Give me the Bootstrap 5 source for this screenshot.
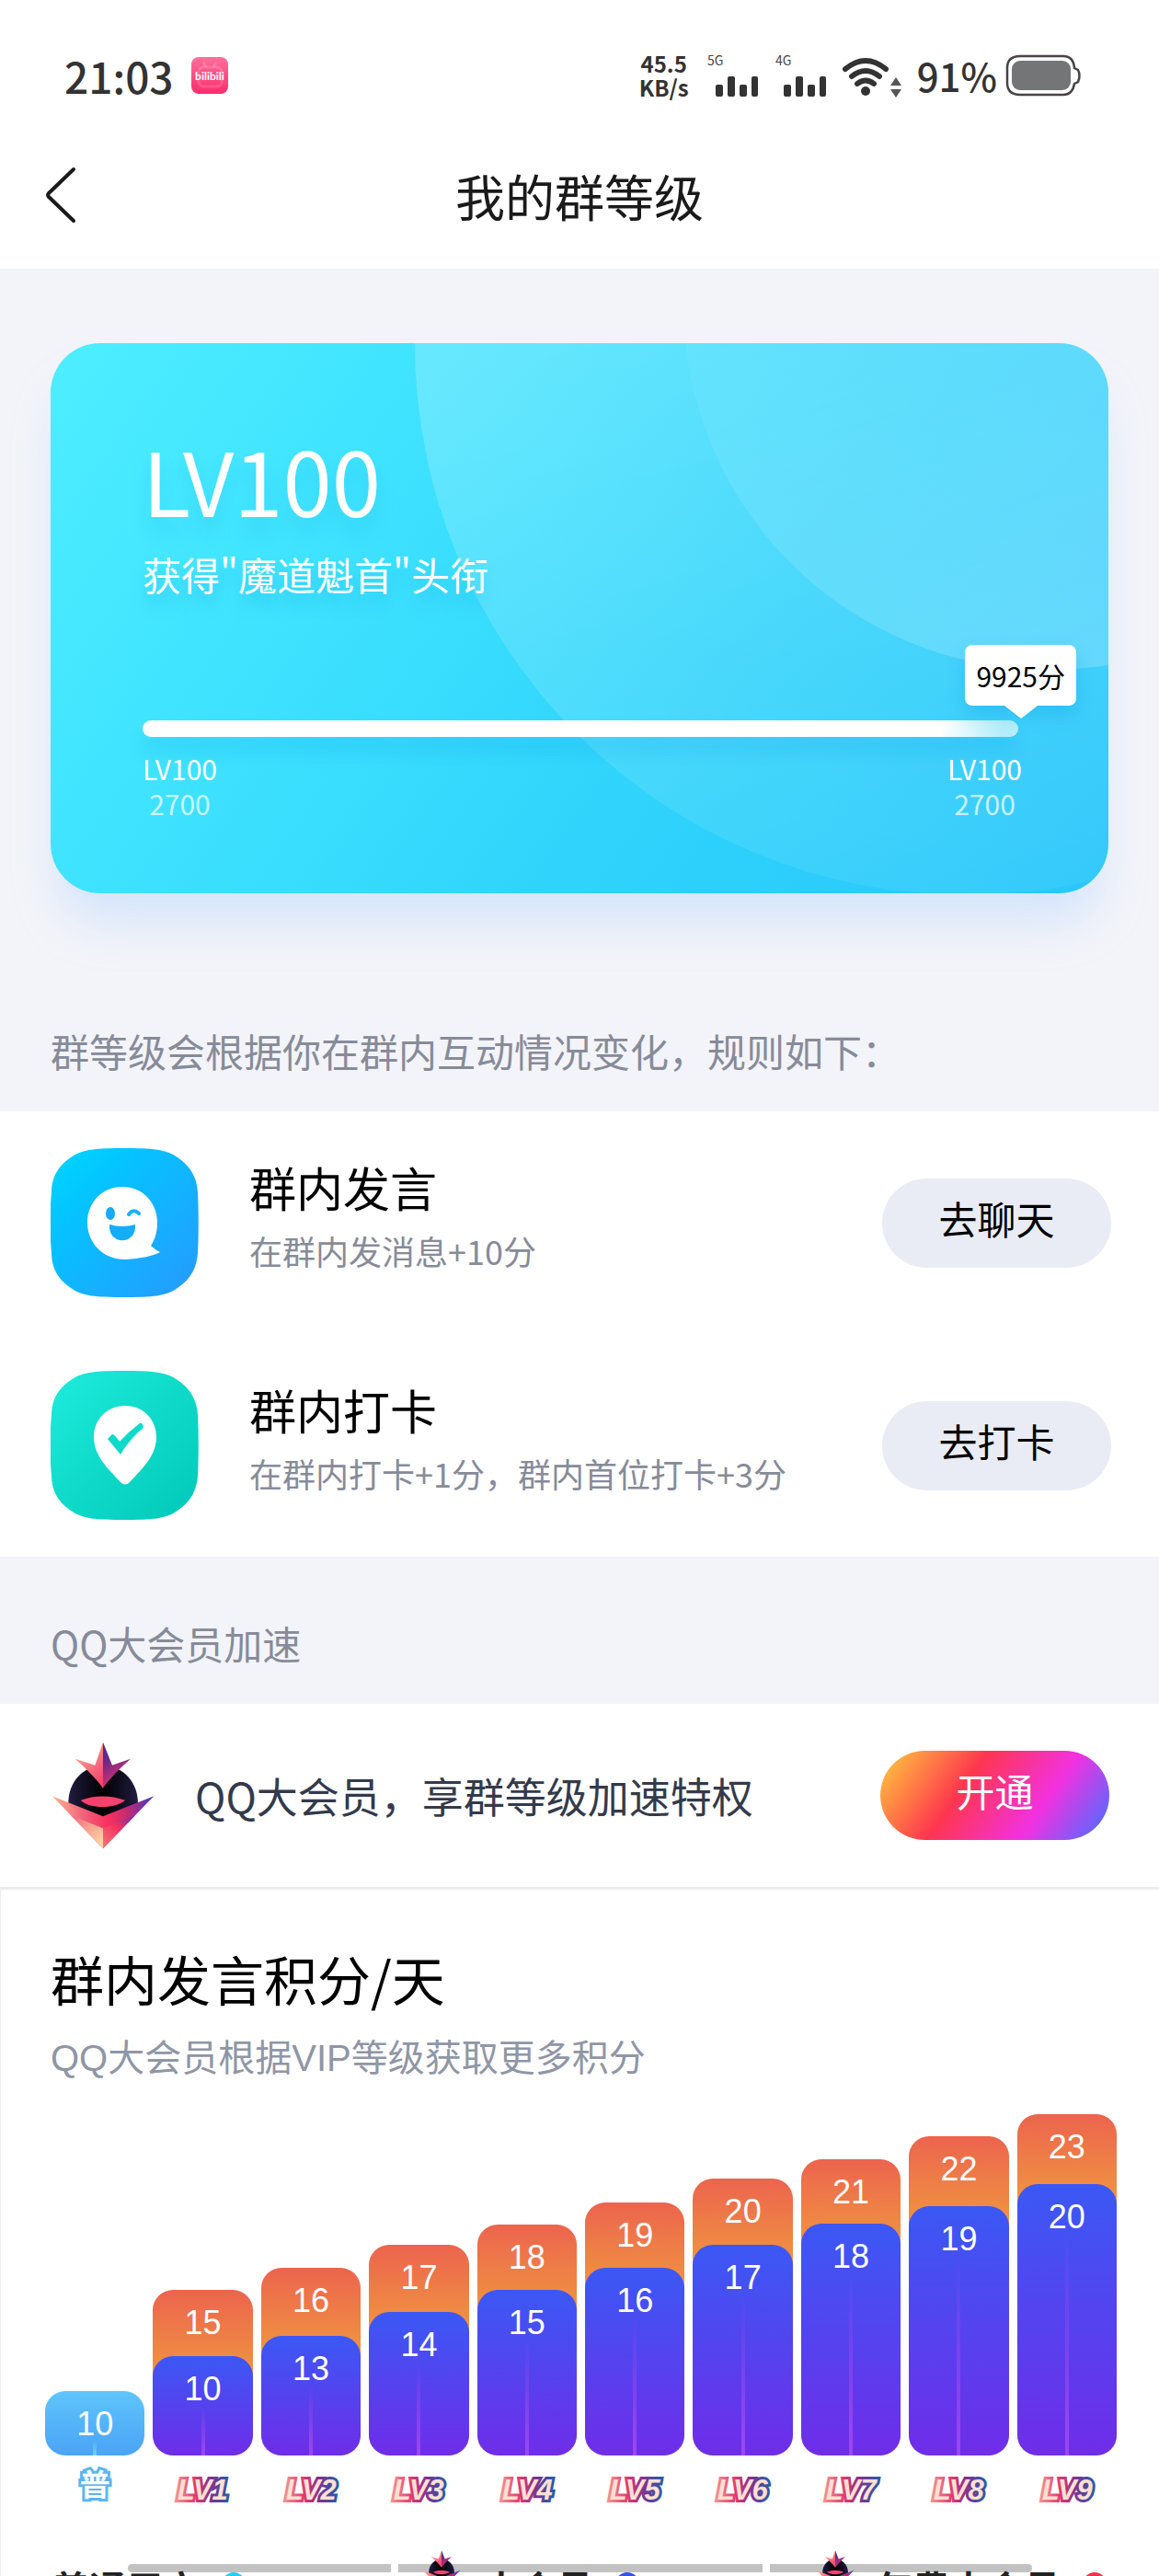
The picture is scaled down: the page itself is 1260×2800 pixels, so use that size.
<!DOCTYPE html>
<html lang="zh-CN">
<head>
    <meta charset="UTF-8">
    <meta name="viewport" content="width=device-width, initial-scale=1">
    <title>我的群等级</title>
    <link href="https://cdn.jsdelivr.net/npm/bootstrap@5.3.0/dist/css/bootstrap.min.css" rel="stylesheet">
    <style>
        body { font-family: "Noto Sans CJK SC", sans-serif; line-height: 1; background-color: #fff; color: #000; }
        .status-bar { height: 140px; padding: 24px 82px 0 70px; color: #333; font-weight: 500; }
        .status-bar svg { overflow: visible; }
        .clock { font-size: 46px; }
        .percent { font-size: 42px; }
        .net-speed { font-size: 24px; font-weight: 700; line-height: 26px; }
        .net-type { font-size: 14px; font-weight: 400; fill: #444; }
        .top-nav { height: 152px; padding: 0 48px 6px; color: #1a1a1a; }
        .top-nav h1 { font-size: 54px; font-weight: 400; line-height: 1; }
        .side-slot { width: 36px; }
        .grey-area { background-color: #f3f4f9; }

        .level-card {
            margin: 0 55px; padding: 98px 94px 79px 100px; border-radius: 54px;
            background: linear-gradient(125deg, #4deeff 0%, #3ce0fe 35%, #2ed2fb 65%, #29c6fb 100%);
            box-shadow: 0 40px 50px -10px rgba(165,205,255,.4);
            color: #fff; isolation: isolate;
        }
        .level-card::before, .level-card::after { content: ""; position: absolute; z-index: -1; border-radius: 50%; }
        .level-card::before { width: 1200px; height: 1200px; top: -600px; right: -446px; background: linear-gradient(160deg, rgba(255,255,255,.2) 40%, rgba(255,255,255,.05) 90%); }
        .level-card::after { width: 794px; height: 794px; top: -439px; right: -332px; background: linear-gradient(160deg, rgba(255,255,255,.03) 40%, rgba(255,255,255,.2) 90%); }
        .level-name { font-size: 96px; line-height: 100px; text-shadow: 0 16px 20px rgba(0,150,220,.2); }
        .level-title { font-size: 42px; margin-top: 32px; text-shadow: 0 14px 16px rgba(0,150,220,.25); }
        .score-track {
            height: 18px; margin-top: 138px; border-radius: 9px;
            background: linear-gradient(100deg, #fff 91%, #b4eefa 98%);
            box-shadow: 0 16px 20px rgba(0,150,220,.2);
        }
        .score-tip {
            right: -63px; bottom: 34px; padding: 17px 12px; border-radius: 8px;
            background: #fff; color: #000; font-size: 30px; line-height: 32px;
            box-shadow: 0 10px 20px rgba(0,140,220,.25);
        }
        .score-tip::after {
            content: ""; position: absolute; top: 100%; left: 50%; margin-left: -18px;
            border: 18px solid transparent; border-top: 14px solid #fff; border-bottom: 0;
        }
        .ends { margin-top: 15px; font-size: 30px; line-height: 38px; text-align: center; }
        .ends span { opacity: .7; }

        .section-label { padding: 0 55px 45px; font-size: 42px; color: #878b99; }
        .rule-row { height: 242px; padding: 0 52px 0 55px; gap: 55px; }
        .rule-row h2 { font-size: 51px; font-weight: 400; line-height: 52px; margin: 0 0 25px; }
        .rule-row p { font-size: 36px; color: #878b99; margin: 0 0 18px; }
        .pill { width: 249px; height: 97px; padding: 0 0 12px; border: 0; border-radius: 49px; font-size: 42px; background-color: #e9ecf4; color: #000; }
        .pill:hover { background-color: #dfe3ee; }
        .pill-vip, .pill-vip:hover { color: #fff; background: linear-gradient(125deg, #ffbe3e 4%, #ff364e 37%, #f231e0 69%, #6067ff 94%); }
        .vip-row { height: 202px; padding: 0 54px 0 56px; gap: 44px; border-bottom: 3px solid #ededed; font-size: 45px; color: #333a4b; }

        .points { padding-top: 67px; border-left: 1px solid #ededed; }
        .points h2 { font-size: 58px; font-weight: 400; line-height: 1; margin: 0 54px; }
        .points-sub { margin: 38px 54px 41px; font-family: "Liberation Sans", "Noto Sans CJK SC", sans-serif; font-size: 40px; line-height: 40px; color: #8f96a6; }
        .chart { padding: 0 46px 0 48px; gap: 9px; }
        .chart > div { flex: 1 1 0; }
        .bar { border-radius: 22px; padding-top: 18px; color: #fff; text-align: center; font-family: "Liberation Sans", Arial, sans-serif; font-size: 36px; line-height: 36px; }
        .bar-year { background: linear-gradient(#ec644e, #f0983f 100px, #f2ab3f 150px); }
        .bar-vip { background: linear-gradient(#3b58f5, #6f2de8); }
        .bar-free { background: linear-gradient(#5ec5fb, #4ba3f6); }
        .bar-vip::after, .bar-free::after { content: ""; display: block; width: 4px; height: calc(100% - 36px); margin: 0 auto; background: linear-gradient(transparent, #9a48f2); }
        .bar-free::after { background: linear-gradient(transparent, #6fd3fc); }
        .level-tag { display: block; width: 100%; height: 44px; margin-top: 12px; overflow: visible; }
        .level-tag text { text-anchor: middle; paint-order: stroke; stroke-linejoin: miter; stroke-miterlimit: 3; }
        .tag-lv { font: italic 700 31px "Liberation Sans", Arial, sans-serif; fill: #fee0d2; stroke: url(#tagLine); stroke-width: 6px; }
        .tag-free { font-size: 33px; font-weight: 700; fill: #fff; stroke: #5cb4f0; stroke-width: 6px; }

        .legend-strip { margin-top: 47px; padding: 0 57px 0 56px; height: 28px; }
        .legend-item { gap: 24px; font-size: 40px; font-weight: 700; color: #222; z-index: 1; }
        .legend-item span { margin-top: 20px; }
        .legend-item i { width: 26px; height: 26px; margin-top: 24px; border-radius: 50%; }
        .scroll-hint { top: 15px; left: 11%; right: 11%; gap: 8px; }
        .scroll-hint b { height: 9px; background: #c2c2c2; flex: 285 1 0; }
        .scroll-hint b:nth-child(2) { flex-grow: 396; }
        .scroll-hint b:first-child { border-radius: 5px 0 0 5px; }
        .scroll-hint b:last-child { border-radius: 0 5px 5px 0; }
    </style>
</head>
<body>

<!-- shared gradients and the member badge -->
<svg width="0" height="0" class="position-absolute" aria-hidden="true">
    <defs>
        <linearGradient id="tagLine"><stop offset="0" stop-color="#f28c8f"/><stop offset=".35" stop-color="#e2396f"/><stop offset=".65" stop-color="#83308f"/><stop offset="1" stop-color="#2c58a8"/></linearGradient>
        <linearGradient id="crownL" x1="0" y1="0" x2=".6" y2="1"><stop offset="0" stop-color="#fbc09c"/><stop offset="1" stop-color="#f5476f"/></linearGradient>
        <linearGradient id="crownR" x1="0" y1="0" x2=".4" y2="1"><stop offset="0" stop-color="#3b2ca0"/><stop offset=".4" stop-color="#6b2889"/><stop offset="1" stop-color="#ec3367"/></linearGradient>
        <linearGradient id="wing"><stop offset="0" stop-color="#fab795"/><stop offset=".3" stop-color="#f0647a"/><stop offset=".55" stop-color="#f8315f"/><stop offset=".75" stop-color="#c02a72"/><stop offset="1" stop-color="#3d39c8"/></linearGradient>
        <linearGradient id="wingL" x1="0" y1="0" x2="1" y2="1"><stop offset="0" stop-color="#f16a7e"/><stop offset="1" stop-color="#fce0a8"/></linearGradient>
        <linearGradient id="wingR" x1="1" y1="0" x2="0" y2="1"><stop offset="0" stop-color="#5b34b8"/><stop offset=".45" stop-color="#f5305f"/><stop offset="1" stop-color="#f57a78"/></linearGradient>
        <linearGradient id="head"><stop offset="0" stop-color="#211c40"/><stop offset=".5" stop-color="#000"/><stop offset="1" stop-color="#211c40"/></linearGradient>
        <symbol id="member" viewBox="48 38 336 350">
            <path d="M103 240C102 170 150 116 216 116s114 54 114 124c0 26-60 56-114 56s-112-30-113-56z" fill="url(#head)"/>
            <path d="M216 40l-26 75-65-21c26 24 64 58 91 96z" fill="url(#crownL)"/>
            <path d="M216 40l30 75 60-21c-26 24-64 58-90 96z" fill="url(#crownR)"/>
            <path d="M143 229q72-26 145 0c-26 27-116 31-145 0z" fill="#f4426d"/>
            <path d="M50 215l166 66 166-66-166 171z" fill="url(#wing)"/>
            <path d="M112 279l104 41v66z" fill="url(#wingL)"/>
            <path d="M320 279l-104 41v66z" fill="url(#wingR)"/>
        </symbol>
    </defs>
</svg>

<header>
    <div class="status-bar d-flex align-items-center">
        <span class="clock">21:03</span>
        <svg class="ms-3 me-auto" width="44" height="42" viewBox="0 0 44 42">
            <defs><linearGradient id="app" x2="0" y2="1"><stop offset="0" stop-color="#ff6f9c"/><stop offset="1" stop-color="#fc2d6d"/></linearGradient></defs>
            <rect x="3" y="1" width="40" height="40" rx="8" fill="url(#app)"/>
            <g fill="none" stroke="#fff" stroke-opacity=".15" stroke-width="3"><rect x="11" y="12" width="25" height="21" rx="5"/><path d="M16 7l3 5M30 7l-3 5"/></g>
            <text x="23" y="26" text-anchor="middle" font-family="Lato, sans-serif" font-weight="700" font-size="12" fill="#fff">bilibili</text>
        </svg>
        <div class="net-speed text-center">45.5<br>KB/s</div>
        <svg class="ms-3" width="58" height="46" viewBox="0 0 58 46">
            <text class="net-type" x="4" y="12">5G</text>
            <g fill="#333"><rect x="13" y="33" width="8" height="13" rx="2"/><rect x="26" y="24" width="8" height="22" rx="2"/><rect x="39" y="33" width="8" height="13" rx="2"/><rect x="52" y="24" width="7" height="22" rx="2"/></g>
        </svg>
        <svg class="ms-3" width="60" height="46" viewBox="0 0 60 46">
            <text class="net-type" x="4" y="12">4G</text>
            <g fill="#333"><rect x="13" y="33" width="8" height="13" rx="2"/><rect x="26" y="24" width="8" height="22" rx="2"/><rect x="39" y="33" width="8" height="13" rx="2"/><rect x="52" y="24" width="7" height="22" rx="2"/></g>
        </svg>
        <svg class="ms-3" width="66" height="42" viewBox="0 0 66 42">
            <g fill="none" stroke="#333" stroke-width="6" stroke-linecap="round"><path d="M4 14q22-18 44 0M11 22q15-12 30 0M17 30q9-7 18 0"/></g>
            <circle cx="26" cy="38" r="5" fill="#333"/>
            <path d="M53 32h12l-6-9zM53 36h12l-6 9z" fill="#555"/>
        </svg>
        <span class="percent ms-3">91%</span>
        <svg class="ms-2" width="86" height="46" viewBox="0 0 86 46">
            <path d="M17 2h47q11 0 12 13l4 2q3 6 0 13l-4 2q-2 12-12 12H17Q3 44 3 31V15Q3 2 17 2z" fill="none" stroke="#4a4244" stroke-width="2.5"/>
            <rect x="8" y="7" width="64" height="32" rx="9" fill="#747577"/>
        </svg>
    </div>
    <nav class="top-nav d-flex align-items-center justify-content-between">
        <a href="#" class="side-slot d-block" aria-label="返回">
            <svg class="d-block" width="36" height="64" viewBox="0 0 36 64"><path d="M32 3L5 29q-2 2 0 4L32 59" fill="none" stroke="#1a1a1a" stroke-width="4" stroke-linecap="round"/></svg>
        </a>
        <h1 class="m-0">我的群等级</h1>
        <div class="side-slot"></div>
    </nav>
</header>

<main>
    <section class="grey-area" style="padding-top: 81px">
        <div class="level-card position-relative overflow-hidden">
            <div class="level-name">LV100</div>
            <div class="level-title">获得"魔道魁首"头衔</div>
            <div class="score-track position-relative me-1">
                <div class="score-tip position-absolute text-nowrap">9925分</div>
            </div>
            <div class="ends d-flex justify-content-between">
                <div>LV100<br><span>2700</span></div>
                <div>LV100<br><span>2700</span></div>
            </div>
        </div>
        <div class="section-label" style="padding-top: 150px">群等级会根据你在群内互动情况变化，规则如下：</div>
    </section>

    <section>
        <div class="rule-row d-flex align-items-center">
            <svg width="161" height="162" viewBox="0 0 161 162">
                <defs><linearGradient id="chat" x2="1" y2="1"><stop offset="0" stop-color="#00d8ff"/><stop offset=".25" stop-color="#03c6ff"/><stop offset="1" stop-color="#2799ff"/></linearGradient></defs>
                <path d="M80 0c30 0 46 1 58 10 15 10 21 23 22 38 1 20 1 46 0 66-1 15-7 28-22 38-12 9-28 10-58 10s-46-1-58-10C7 142 1 129 1 114-1 94-1 68 1 48 1 33 7 20 22 10 34 1 50 0 80 0z" fill="url(#chat)"/>
                <path d="M78 42c22 0 38 17 38 39 0 11-3 19-7 25q4 4 10 7c-7 4-21 7-38 8-24 0-41-18-41-40s16-39 38-39z" fill="#fff"/>
                <ellipse cx="65" cy="71" rx="5" ry="7" fill="#18a9f8"/>
                <path d="M85 72q5-7 11-1" fill="none" stroke="#18b2fa" stroke-width="4" stroke-linecap="round"/>
                <path d="M64 83q14 4 28 0c2 23-30 23-28 0z" fill="#12aef9"/>
            </svg>
            <div class="me-auto">
                <h2>群内发言</h2>
                <p>在群内发消息+10分</p>
            </div>
            <button type="button" class="btn pill">去聊天</button>
        </div>
        <div class="rule-row d-flex align-items-center">
            <svg width="161" height="162" viewBox="0 0 161 162">
                <defs><linearGradient id="pin" x2="1" y2="1"><stop offset="0" stop-color="#1eecdc"/><stop offset="1" stop-color="#00c8b8"/></linearGradient></defs>
                <path d="M80 0c30 0 46 1 58 10 15 10 21 23 22 38 1 20 1 46 0 66-1 15-7 28-22 38-12 9-28 10-58 10s-46-1-58-10C7 142 1 129 1 114-1 94-1 68 1 48 1 33 7 20 22 10 34 1 50 0 80 0z" fill="url(#pin)"/>
                <path d="M81 38c20 0 34 15 34 34 0 20-15 34-29 49q-5 5-10 0C62 106 47 92 47 72c0-19 14-34 34-34z" fill="#fff"/>
                <path d="M62 74l5-5q2-1 8 8 10-11 22-20 3-1 4 5c-10 8-17 16-25 29z" fill="#0ddac9"/>
            </svg>
            <div class="me-auto">
                <h2>群内打卡</h2>
                <p>在群内打卡+1分，群内首位打卡+3分</p>
            </div>
            <button type="button" class="btn pill">去打卡</button>
        </div>
    </section>

    <section>
        <div class="section-label grey-area" style="padding-top: 73px">QQ大会员加速</div>
        <div class="vip-row d-flex align-items-center">
            <svg width="112" height="117"><use href="#member"/></svg>
            <div class="me-auto">QQ大会员，享群等级加速特权</div>
            <button type="button" class="btn pill pill-vip">开通</button>
        </div>
    </section>

    <section class="points">
        <h2>群内发言积分/天</h2>
        <p class="points-sub">QQ大会员根据VIP等级获取更多积分</p>
        <div id="chart" class="chart d-flex align-items-end"></div>

        <div class="legend-strip position-relative overflow-hidden d-flex justify-content-between align-items-start">
            <div class="scroll-hint position-absolute d-flex"><b></b><b></b><b></b></div>
            <div class="legend-item d-flex align-items-start"><span>普通用户</span><i style="background: #1fd0f5"></i></div>
            <div class="legend-item d-flex align-items-start"><svg width="42" height="43"><use href="#member"/></svg><span>大会员</span><i style="background: #3550f0"></i></div>
            <div class="legend-item d-flex align-items-start"><svg width="42" height="43"><use href="#member"/></svg><span>年费大会员</span><i style="background: #f2334c"></i></div>
        </div>
    </section>
</main>

<script src="https://cdn.jsdelivr.net/npm/bootstrap@5.3.0/dist/js/bootstrap.bundle.min.js"></script>
<script>
    // points per day, with the bar heights in px
    const levels = [
        { vip: 10, vipH: 108, year: 15, yearH: 180 },
        { vip: 13, vipH: 130, year: 16, yearH: 204 },
        { vip: 14, vipH: 156, year: 17, yearH: 229 },
        { vip: 15, vipH: 180, year: 18, yearH: 251 },
        { vip: 16, vipH: 204, year: 19, yearH: 275 },
        { vip: 17, vipH: 229, year: 20, yearH: 301 },
        { vip: 18, vipH: 252, year: 21, yearH: 322 },
        { vip: 19, vipH: 271, year: 22, yearH: 347 },
        { vip: 20, vipH: 295, year: 23, yearH: 371 }
    ];

    let html = `
        <div>
            <div class="bar bar-free" style="height: 70px">10</div>
            <svg class="level-tag"><text class="tag-free" x="50%" y="32">普</text></svg>
        </div>`;

    levels.forEach((item, i) => {
        html += `
        <div>
            <div class="bar bar-year d-flex flex-column justify-content-between" style="height: ${item.yearH}px">
                <span>${item.year}</span>
                <div class="bar bar-vip" style="height: ${item.vipH}px">${item.vip}</div>
            </div>
            <svg class="level-tag"><text class="tag-lv" x="50%" y="36">LV${i + 1}</text></svg>
        </div>`;
    });

    document.getElementById("chart").innerHTML = html;
</script>
</body>
</html>
